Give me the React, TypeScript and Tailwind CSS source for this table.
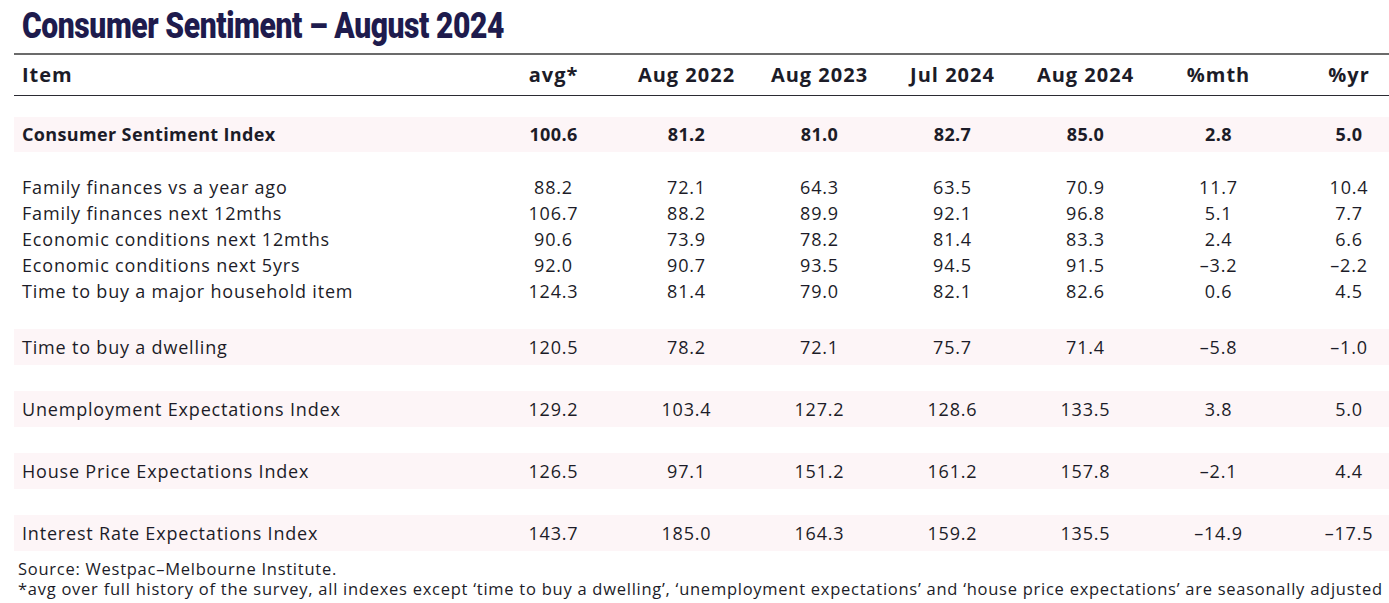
const columns = ["avg*", "Aug 2022", "Aug 2023", "Jul 2024", "Aug 2024", "%mth", "%yr"];

type Row = { label: string; values: string[] };

const headline: Row = {
  label: "Consumer Sentiment Index",
  values: ["100.6", "81.2", "81.0", "82.7", "85.0", "2.8", "5.0"],
};

const components: Row[] = [
  { label: "Family finances vs a year ago", values: ["88.2", "72.1", "64.3", "63.5", "70.9", "11.7", "10.4"] },
  { label: "Family finances next 12mths", values: ["106.7", "88.2", "89.9", "92.1", "96.8", "5.1", "7.7"] },
  { label: "Economic conditions next 12mths", values: ["90.6", "73.9", "78.2", "81.4", "83.3", "2.4", "6.6"] },
  { label: "Economic conditions next 5yrs", values: ["92.0", "90.7", "93.5", "94.5", "91.5", "\u20133.2", "\u20132.2"] },
  { label: "Time to buy a major household item", values: ["124.3", "81.4", "79.0", "82.1", "82.6", "0.6", "4.5"] },
];

const indexes: Row[] = [
  { label: "Time to buy a dwelling", values: ["120.5", "78.2", "72.1", "75.7", "71.4", "\u20135.8", "\u20131.0"] },
  { label: "Unemployment Expectations Index", values: ["129.2", "103.4", "127.2", "128.6", "133.5", "3.8", "5.0"] },
  { label: "House Price Expectations Index", values: ["126.5", "97.1", "151.2", "161.2", "157.8", "\u20132.1", "4.4"] },
  { label: "Interest Rate Expectations Index", values: ["143.7", "185.0", "164.3", "159.2", "135.5", "\u201314.9", "\u201317.5"] },
];

const grid = "grid grid-cols-[473px_repeat(6,133px)_104px] items-center";

function Cells({ values }: { values: string[] }) {
  return (
    <>
      {values.map((v, i) => (
        <div key={i} className={i === values.length - 1 ? "text-center pl-6" : "text-center"}>
          {v}
        </div>
      ))}
    </>
  );
}

function ShadedRow({ row, bold }: { row: Row; bold?: boolean }) {
  return (
    <div
      className={`${grid} bg-[#fdf5f7] ${bold ? "h-[35px] font-bold tracking-[0.02em]" : "h-[36px]"}`}
    >
      <div className="pl-2">{row.label}</div>
      <Cells values={row.values} />
    </div>
  );
}

export default function App() {
  return (
    <div
      className="w-[1389px] h-[603px] overflow-hidden bg-white text-[#1c1c28]"
      style={{ fontFamily: '"Open Sans", "Liberation Sans", sans-serif' }}
    >
      <div className="h-[53px] pl-[22px] pt-[4px]">
        <h1
          className="inline-block origin-left scale-x-[0.835] text-[#1e1b4d] text-[36px] font-black leading-[44px] tracking-[-0.5px] whitespace-nowrap"
          style={{ fontFamily: 'Roboto, "Liberation Sans", sans-serif' }}
        >
          Consumer Sentiment – August 2024
        </h1>
      </div>

      <div className="ml-[14px] w-[1375px] text-[18px] tracking-[0.045em]">
        <div
          className={`${grid} h-[43px] border-t-2 border-b border-t-[#6b6b6b] border-b-[#2b2b33] font-bold text-[20px] tracking-[0.05em]`}
        >
          <div className="pl-2">Item</div>
          <Cells values={columns} />
        </div>

        <div className="h-[21px]" />
        <ShadedRow row={headline} bold />
        <div className="h-[22px]" />

        {components.map((row) => (
          <div key={row.label} className={`${grid} h-[26px]`}>
            <div className="pl-2">{row.label}</div>
            <Cells values={row.values} />
          </div>
        ))}

        <div className="flex flex-col gap-[26px] pt-[25px]">
          {indexes.map((row) => (
            <ShadedRow key={row.label} row={row} />
          ))}
        </div>

        <div className="pt-[8px] pl-1 text-[16.5px] leading-[20px] tracking-[0.045em] whitespace-nowrap">
          <p>Source: Westpac–Melbourne Institute.</p>
          <p>
            *avg over full history of the survey, all indexes except ‘time to buy a dwelling’, ‘unemployment
            expectations’ and ‘house price expectations’ are seasonally adjusted
          </p>
        </div>
      </div>
    </div>
  );
}
